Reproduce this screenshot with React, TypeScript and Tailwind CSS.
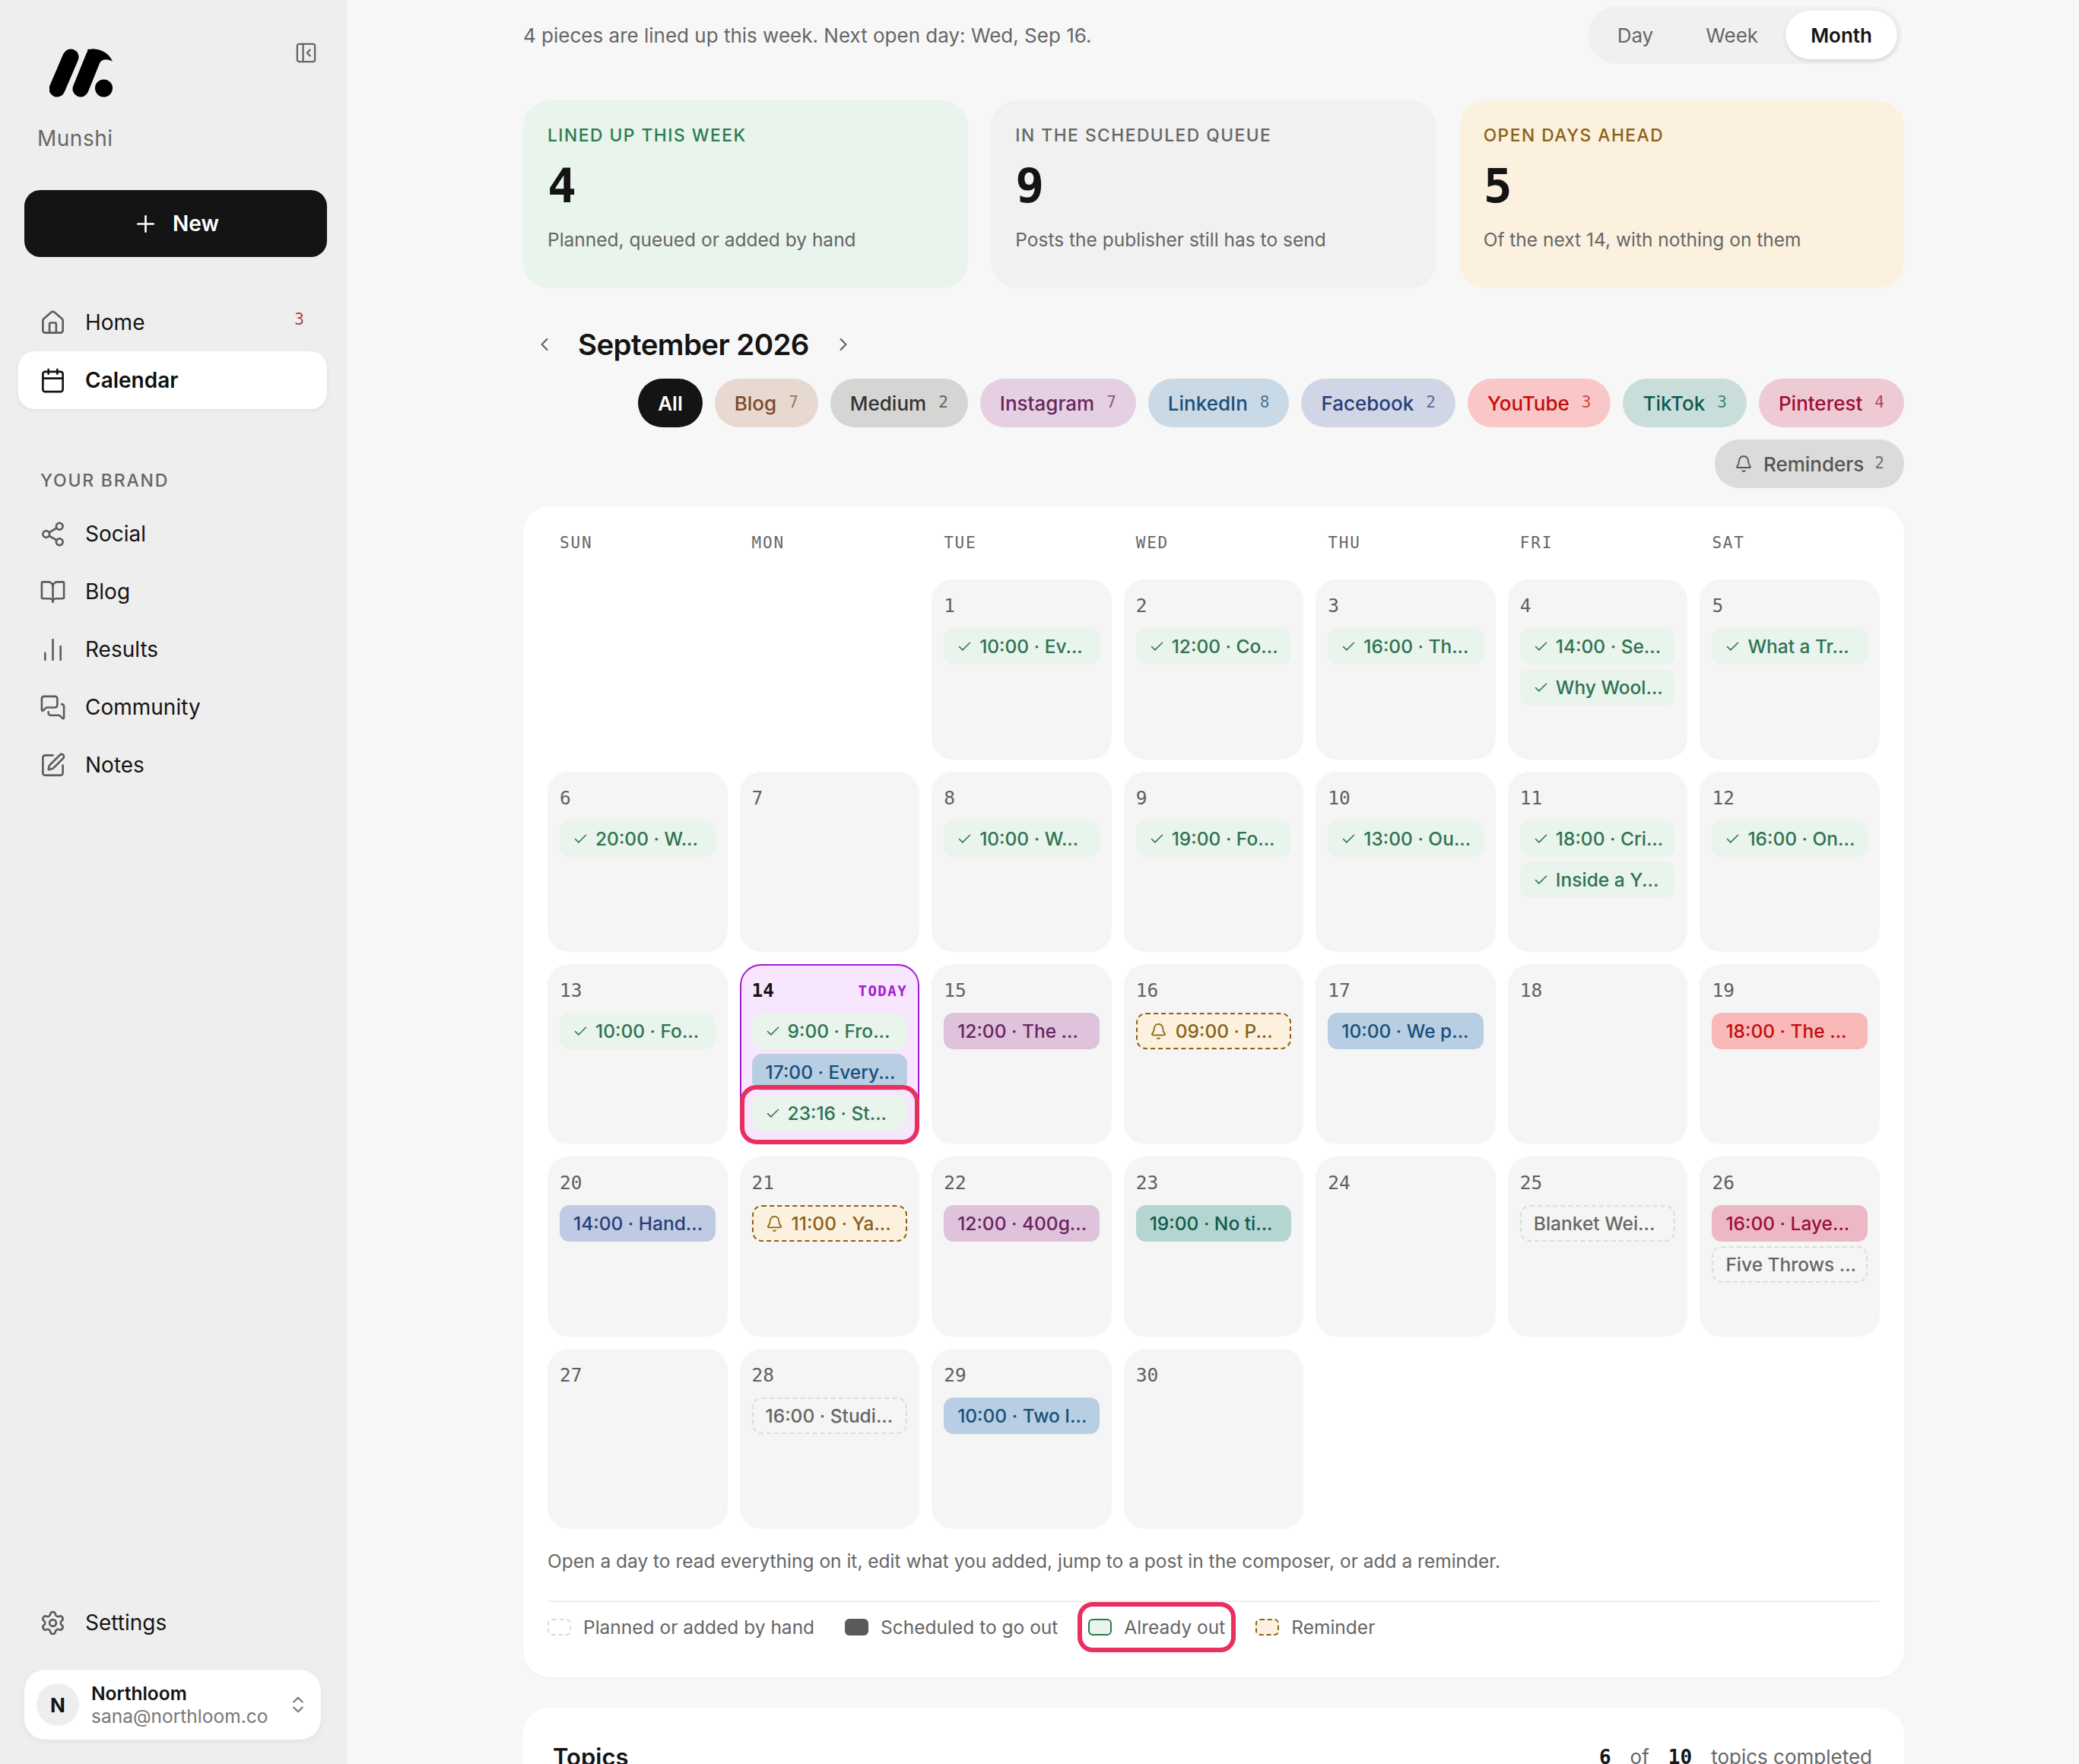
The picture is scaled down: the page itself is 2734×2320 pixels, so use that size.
import {
  BookOpen,
  Bell,
  Calendar,
  ChartNoAxesColumn,
  Check,
  ChevronLeft,
  ChevronRight,
  ChevronsUpDown,
  House,
  MessagesSquare,
  PanelLeftClose,
  Plus,
  Settings,
  Share2,
  SquarePen,
} from 'lucide-react';

type PillKind = 'out' | 'linkedin' | 'instagram' | 'facebook' | 'tiktok' | 'youtube' | 'pinterest' | 'reminder' | 'planned';

interface Post {
  kind: PillKind;
  label: string;
}

interface Day {
  day: number;
  posts?: Post[];
}

const pillClass: Record<PillKind, string> = {
  out: 'bg-[#E8F4EC] text-[#2F7350]',
  linkedin: 'bg-[#B7CEE3] text-[#1A4F7A]',
  instagram: 'bg-[#DFC3DC] text-[#6B2460]',
  facebook: 'bg-[#BFCAE3] text-[#2A3F77]',
  tiktok: 'bg-[#B5D6D0] text-[#0D5A50]',
  youtube: 'bg-[#F9B9B9] text-[#C20C0C]',
  pinterest: 'bg-[#EDB8C6] text-[#9E0E35]',
  reminder: 'border-2 border-dashed border-[#8A6116] bg-[#FCF1DF] text-[#8A6116]',
  planned: 'border-2 border-dashed border-[#DCDCDC] text-[#666666]',
};

const out = (label: string): Post => ({ kind: 'out', label });

const days: (Day | null)[] = [
  null,
  null,
  { day: 1, posts: [out('10:00 · Ev...')] },
  { day: 2, posts: [out('12:00 · Co...')] },
  { day: 3, posts: [out('16:00 · Th...')] },
  { day: 4, posts: [out('14:00 · Se...'), out('Why Wool...')] },
  { day: 5, posts: [out('What a Tr...')] },
  { day: 6, posts: [out('20:00 · W...')] },
  { day: 7 },
  { day: 8, posts: [out('10:00 · W...')] },
  { day: 9, posts: [out('19:00 · Fo...')] },
  { day: 10, posts: [out('13:00 · Ou...')] },
  { day: 11, posts: [out('18:00 · Cri...'), out('Inside a Y...')] },
  { day: 12, posts: [out('16:00 · On...')] },
  { day: 13, posts: [out('10:00 · Fo...')] },
  {
    day: 14,
    posts: [out('9:00 · Fro...'), { kind: 'linkedin', label: '17:00 · Every...' }, out('23:16 · St...')],
  },
  { day: 15, posts: [{ kind: 'instagram', label: '12:00 · The ...' }] },
  { day: 16, posts: [{ kind: 'reminder', label: '09:00 · P...' }] },
  { day: 17, posts: [{ kind: 'linkedin', label: '10:00 · We p...' }] },
  { day: 18 },
  { day: 19, posts: [{ kind: 'youtube', label: '18:00 · The ...' }] },
  { day: 20, posts: [{ kind: 'facebook', label: '14:00 · Hand...' }] },
  { day: 21, posts: [{ kind: 'reminder', label: '11:00 · Ya...' }] },
  { day: 22, posts: [{ kind: 'instagram', label: '12:00 · 400g...' }] },
  { day: 23, posts: [{ kind: 'tiktok', label: '19:00 · No ti...' }] },
  { day: 24 },
  { day: 25, posts: [{ kind: 'planned', label: 'Blanket Wei...' }] },
  {
    day: 26,
    posts: [
      { kind: 'pinterest', label: '16:00 · Laye...' },
      { kind: 'planned', label: 'Five Throws ...' },
    ],
  },
  { day: 27 },
  { day: 28, posts: [{ kind: 'planned', label: '16:00 · Studi...' }] },
  { day: 29, posts: [{ kind: 'linkedin', label: '10:00 · Two I...' }] },
  { day: 30 },
];

const chips = [
  { name: 'Blog', count: 7, cls: 'bg-[#E8D9D0] text-[#7A4A2D]' },
  { name: 'Medium', count: 2, cls: 'bg-[#D5D5D3] text-[#333333]' },
  { name: 'Instagram', count: 7, cls: 'bg-[#E4D0E2] text-[#6B2460]' },
  { name: 'LinkedIn', count: 8, cls: 'bg-[#C9D9E6] text-[#1A4F7A]' },
  { name: 'Facebook', count: 2, cls: 'bg-[#D1D6E6] text-[#2A3F77]' },
  { name: 'YouTube', count: 3, cls: 'bg-[#F9C7C7] text-[#C20C0C]' },
  { name: 'TikTok', count: 3, cls: 'bg-[#C9DEDA] text-[#0D5A50]' },
  { name: 'Pinterest', count: 4, cls: 'bg-[#EDCAD4] text-[#9E0E35]' },
];

const brandNav = [
  { name: 'Social', icon: Share2 },
  { name: 'Blog', icon: BookOpen },
  { name: 'Results', icon: ChartNoAxesColumn },
  { name: 'Community', icon: MessagesSquare },
  { name: 'Notes', icon: SquarePen },
];

const stats = [
  {
    label: 'LINED UP THIS WEEK',
    value: '4',
    note: 'Planned, queued or added by hand',
    bg: 'bg-[#E8F4EC]',
    color: 'text-[#2D7A4F]',
  },
  {
    label: 'IN THE SCHEDULED QUEUE',
    value: '9',
    note: 'Posts the publisher still has to send',
    bg: 'bg-[#F1F1F1]',
    color: 'text-[#666666]',
  },
  {
    label: 'OPEN DAYS AHEAD',
    value: '5',
    note: 'Of the next 14, with nothing on them',
    bg: 'bg-[#FCF1DF]',
    color: 'text-[#8A6116]',
  },
];

const mono = "font-['DejaVu_Sans_Mono',monospace]";

const Logo = () => (
  <svg width="83" height="64" viewBox="0 0 83 64" fill="#000000">
    <path d="M10 53 28 11" stroke="#000000" strokeWidth="21" strokeLinecap="round" />
    <path d="M41 53 58 11" stroke="#000000" strokeWidth="21" strokeLinecap="round" />
    <path d="M50 1C62-1 77 2 83 17 75 12 67 14 62 24L52 18Z" />
    <circle cx="71.5" cy="52" r="11.5" />
  </svg>
);

function NavRow({ icon: Icon, name, active, badge }: { icon: typeof House; name: string; active?: boolean; badge?: string }) {
  return (
    <div
      className={`flex h-[76px] items-center gap-[25px] rounded-[21px] pl-[28px] pr-[30px] text-[28px] ${
        active ? 'bg-white font-semibold text-[#111111] shadow-[0_2px_6px_rgba(0,0,0,0.06)]' : 'text-[#141414]'
      }`}
    >
      <Icon size={35} strokeWidth={1.8} className={active ? 'text-[#141414]' : 'text-[#5C5C5C]'} />
      <span>{name}</span>
      {badge && <span className={`ml-auto mb-[6px] text-[21px] text-[#B5413B] ${mono}`}>{badge}</span>}
    </div>
  );
}

function Sidebar() {
  return (
    <aside className="flex h-full w-[456px] shrink-0 flex-col bg-[#EEEEEE] pb-[32px] pt-[54px]">
      <div className="flex items-start justify-between pl-[65px] pr-[38px]">
        <div className="mt-[10px]">
          <Logo />
        </div>
        <PanelLeftClose size={31} strokeWidth={1.8} className="text-[#666666]" />
      </div>
      <div className="ml-[49px] mt-[37px] text-[28px] leading-[34px] tracking-[0.5px] text-[#666666]">Munshi</div>
      <div className="ml-[32px] mt-[51px] flex h-[88px] w-[398px] items-center justify-center gap-[18px] rounded-[21px] bg-[#141414] text-[28px] font-semibold text-white">
        <Plus size={35} strokeWidth={1.8} />
        <span>New</span>
      </div>
      <nav className="ml-[24px] mt-[48px] w-[406px]">
        <NavRow icon={House} name="Home" badge="3" />
        <NavRow icon={Calendar} name="Calendar" active />
      </nav>
      <div className="ml-[53px] mt-[80px] text-[23px] font-medium leading-[28px] tracking-[1.8px] text-[#666666]">YOUR BRAND</div>
      <nav className="ml-[24px] mt-[18px] w-[406px]">
        {brandNav.map((item) => (
          <NavRow key={item.name} icon={item.icon} name={item.name} />
        ))}
      </nav>
      <div className="ml-[24px] mt-auto w-[406px]">
        <NavRow icon={Settings} name="Settings" />
      </div>
      <div className="ml-[32px] mt-[24px] flex h-[92px] w-[390px] items-center gap-[16px] rounded-[28px] bg-white pl-[16px] pr-[16px] shadow-[0_3px_10px_rgba(0,0,0,0.05)]">
        <div className="flex h-[56px] w-[56px] items-center justify-center rounded-full bg-[#EEEEEE] text-[26px] font-bold text-[#141414]">N</div>
        <div className="flex flex-col">
          <span className="text-[24.5px] font-semibold leading-[30px] text-[#141414]">Northloom</span>
          <span className="text-[24.5px] leading-[30px] text-[#777777]">sana@northloom.co</span>
        </div>
        <ChevronsUpDown size={28} strokeWidth={1.8} className="ml-auto text-[#777777]" />
      </div>
    </aside>
  );
}

function PostPill({ post }: { post: Post }) {
  return (
    <div className={`flex h-[48px] items-center whitespace-nowrap rounded-[13px] text-[24.5px] font-medium ${pillClass[post.kind]} ${post.kind === 'out' ? 'pl-[17px] gap-[9px]' : post.kind === 'reminder' ? 'pl-[16px] gap-[11px]' : post.kind === 'planned' ? 'pl-[16px]' : 'pl-[18px]'}`}>
      {post.kind === 'out' && <Check size={21} strokeWidth={1.8} />}
      {post.kind === 'reminder' && <Bell size={23} strokeWidth={1.8} />}
      <span>{post.label}</span>
    </div>
  );
}

function DayCell({ item }: { item: Day | null }) {
  if (!item) return <div className="h-[237px]" />;
  const today = item.day === 14;
  return (
    <div
      className={`relative h-[237px] rounded-[28px] ${
        today ? 'border-2 border-[#A21CCF] bg-[#F7E6FD] p-[14px]' : 'bg-[#F5F5F5] p-[16px]'
      }`}
    >
      <div className="flex h-[38px] items-center justify-between">
        <span className={`text-[24.5px] ${today ? 'font-semibold text-[#141414]' : 'text-[#5F5F5F]'} ${mono}`}>{item.day}</span>
        {today && <span className={`text-[19px] font-bold tracking-[1.5px] text-[#A21CCF] ${mono}`}>TODAY</span>}
      </div>
      {item.posts && (
        <div className="mt-[10px] flex flex-col gap-[6px]">
          {item.posts.map((post) => (
            <PostPill key={post.label} post={post} />
          ))}
        </div>
      )}
      {today && (
        <div className="absolute bottom-[-2px] left-[-2px] right-[-2px] h-[78px] rounded-[22px] border-[6px] border-[#E8305F]" />
      )}
    </div>
  );
}

function LegendItem({ swatch, label, ringed }: { swatch: string; label: string; ringed?: boolean }) {
  return (
    <div className="relative flex items-center gap-[16px]">
      <div className={`h-[22px] w-[31px] rounded-[6px] ${swatch}`} />
      <span>{label}</span>
      {ringed && (
        <div className="absolute bottom-[-15px] left-[-14px] right-[-14px] top-[-15px] rounded-[20px] border-[6px] border-[#E8305F]" />
      )}
    </div>
  );
}

export default function App() {
  return (
    <div className="flex h-[2320px] w-[2734px] overflow-hidden bg-[#F7F7F7] font-['Inter',sans-serif]">
      <Sidebar />
      <main className="w-[2278px] pl-[232px] pr-[230px] pt-[8px]">
        <div className="flex h-[76px] items-center justify-between">
          <p className="text-[26px] text-[#666666]">4 pieces are lined up this week. Next open day: Wed, Sep 16.</p>
          <div className="mr-[3px] flex h-[76px] items-center gap-[3px] rounded-full bg-[#F0F0F0] px-[6px] text-[26px] text-[#666666]">
            <span className="px-[33px]">Day</span>
            <span className="px-[33px]">Week</span>
            <span className="flex h-[64px] items-center rounded-full bg-white px-[33px] font-semibold text-[#141414] shadow-[0_2px_5px_rgba(0,0,0,0.12)]">Month</span>
          </div>
        </div>

        <div className="mt-[48px] grid grid-cols-3 gap-[30px]">
          {stats.map((s) => (
            <div key={s.label} className={`h-[247px] rounded-[35px] px-[32px] pt-[32px] ${s.bg}`}>
              <div className={`text-[22.75px] font-medium leading-[28px] tracking-[1.5px] ${s.color}`}>{s.label}</div>
              <div className={`mt-[16px] text-[63px] font-bold leading-[74px] text-[#141414] ${mono}`}>{s.value}</div>
              <div className="mt-[16px] text-[24.5px] leading-[34px] text-[#666666]">{s.note}</div>
            </div>
          ))}
        </div>

        <div className="mt-[51px] flex h-[46px] items-center">
          <ChevronLeft size={28} strokeWidth={1.8} className="ml-[14px] text-[#5C5C5C]" />
          <h1 className="ml-[30px] text-[38.5px] font-semibold leading-[46px] tracking-[-0.6px] text-[#141414]">September 2026</h1>
          <ChevronRight size={28} strokeWidth={1.8} className="ml-[31px] text-[#5C5C5C]" />
        </div>

        <div className="mt-[22px] flex flex-wrap justify-end gap-[16px] text-[26px] font-medium">
          <span className="flex h-[64px] items-center rounded-full bg-[#141414] px-[26px] font-semibold text-white">All</span>
          {chips.map((c) => (
            <span key={c.name} className={`flex h-[64px] items-center gap-[16px] rounded-full px-[26px] ${c.cls}`}>
              {c.name}
              <span className={`text-[21px] font-normal opacity-70 ${mono}`}>{c.count}</span>
            </span>
          ))}
          <span className="flex h-[64px] items-center gap-[14px] rounded-full bg-[#DBDBDB] px-[26px] text-[#555555]">
            <Bell size={24} strokeWidth={1.8} />
            Reminders
            <span className={`text-[21px] font-normal opacity-80 ${mono}`}>2</span>
          </span>
        </div>

        <section className="mt-[24px] rounded-[35px] bg-white px-[32px] pb-[33px] pt-[34px] shadow-[0_1px_3px_rgba(0,0,0,0.03)]">
          <div className={`grid grid-cols-7 gap-[16px] text-[21px] leading-[28px] tracking-[1.8px] text-[#666666] ${mono}`}>
            {['SUN', 'MON', 'TUE', 'WED', 'THU', 'FRI', 'SAT'].map((d) => (
              <div key={d} className="pl-[16px]">{d}</div>
            ))}
          </div>
          <div className="mt-[34px] grid grid-cols-7 gap-[16px]">
            {days.map((item, i) => (
              <DayCell key={i} item={item} />
            ))}
          </div>
          <p className="mt-[24px] text-[24.5px] leading-[36px] text-[#666666]">
            Open a day to read everything on it, edit what you added, jump to a post in the composer, or add a reminder.
          </p>
          <div className="mt-[34px] flex h-[68px] items-center gap-[40px] border-t-2 border-[#EFEFEF] text-[24.5px] text-[#666666]">
            <LegendItem swatch="border-2 border-dashed border-[#DCDCDC]" label="Planned or added by hand" />
            <LegendItem swatch="bg-[#5A5A5A]" label="Scheduled to go out" />
            <LegendItem swatch="border-2 border-[#2D7A4F] bg-[#E8F4EC]" label="Already out" ringed />
            <LegendItem swatch="border-2 border-dashed border-[#8A6116] bg-[#FCF1DF]" label="Reminder" />
          </div>
        </section>

        <section className="mt-[40px] flex items-start justify-between rounded-t-[35px] bg-white pb-[40px] pl-[39px] pr-[42px] pt-[45px]">
          <h2 className="text-[31px] font-semibold leading-[40px] text-[#141414]">Topics</h2>
          <div className="flex gap-[25px] text-[26px] leading-[40px] text-[#666666]">
            <span className={`font-bold text-[#141414] ${mono}`}>6</span>
            <span>of</span>
            <span className={`font-bold text-[#141414] ${mono}`}>10</span>
            <span>topics completed</span>
          </div>
        </section>
      </main>
    </div>
  );
}
